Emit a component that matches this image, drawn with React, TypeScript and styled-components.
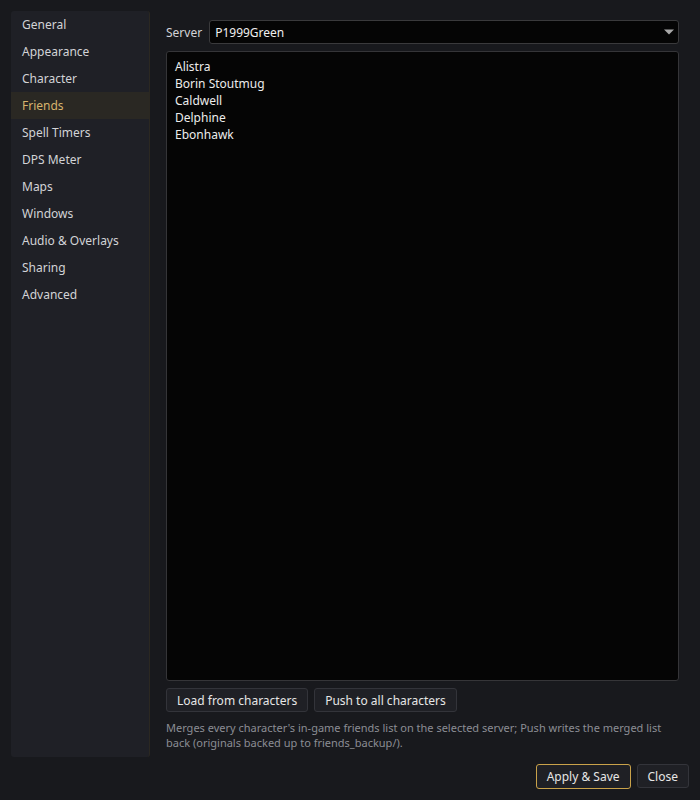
import styled, { createGlobalStyle } from "styled-components";

const GlobalStyle = createGlobalStyle`
  html, body {
    margin: 0;
    padding: 0;
    background: #18191d;
  }
  body {
    font-family: "Noto Sans", "Open Sans", sans-serif;
    font-size: 12px;
    color: #dcdcdc;
  }
  * {
    box-sizing: border-box;
  }
`;

const sections = [
  "General",
  "Appearance",
  "Character",
  "Friends",
  "Spell Timers",
  "DPS Meter",
  "Maps",
  "Windows",
  "Audio & Overlays",
  "Sharing",
  "Advanced",
];

const friends = ["Alistra", "Borin Stoutmug", "Caldwell", "Delphine", "Ebonhawk"];

const Window = styled.div`
  width: 700px;
  height: 800px;
  padding: 11px;
  display: flex;
  flex-direction: column;
  gap: 7px;
`;

const Main = styled.div`
  flex: 1;
  display: flex;
  gap: 16px;
  min-height: 0;
`;

const Sidebar = styled.nav`
  width: 139px;
  background: #1f2026;
  border-right: 1px solid #2b2821;
  border-radius: 3px;
  display: flex;
  flex-direction: column;
`;

const NavItem = styled.div<{ $active?: boolean }>`
  height: 27px;
  line-height: 27px;
  padding-left: 11px;
  color: ${(p) => (p.$active ? "#d6b36c" : "#d2d3d6")};
  background: ${(p) => (p.$active ? "#2a2823" : "transparent")};
`;

const Content = styled.div`
  flex: 1;
  display: flex;
  flex-direction: column;
  gap: 7px;
  padding: 9px 10px 7px 0;
  min-width: 0;
`;

const ServerRow = styled.div`
  display: flex;
  align-items: center;
  gap: 7px;
`;

const Label = styled.span`
  color: #d2d3d6;
`;

const Combo = styled.div`
  flex: 1;
  height: 24px;
  display: flex;
  align-items: center;
  justify-content: space-between;
  padding: 0 4px 0 5px;
  background: #050505;
  border: 1px solid #3a3a3c;
  border-radius: 3px;
  color: #f0f0f0;
`;

const List = styled.div`
  flex: 1;
  background: #050505;
  border: 1px solid #353538;
  border-radius: 3px;
  padding: 6px 8px;
  display: flex;
  flex-direction: column;
`;

const ListItem = styled.div`
  line-height: 17px;
  color: #ececec;
`;

const ButtonRow = styled.div<{ $end?: boolean }>`
  display: flex;
  gap: 6px;
  justify-content: ${(p) => (p.$end ? "flex-end" : "flex-start")};
`;

const Button = styled.button<{ $primary?: boolean }>`
  height: ${(p) => (p.$primary ? "25px" : "24px")};
  padding: 0 10px;
  font-family: inherit;
  font-size: 12px;
  color: #e6e6e6;
  background: #1f2025;
  border: 1px solid ${(p) => (p.$primary ? "#c9a24a" : "#33343a")};
  border-radius: 3px;
`;

const Help = styled.p`
  margin: 1px 0 0;
  font-size: 11px;
  line-height: 15px;
  color: #8b8d94;
`;

const Arrow = () => (
  <svg width="10" height="6" viewBox="0 0 10 6">
    <path d="M0 0.5h10L5 5.5z" fill="#a9a9a9" />
  </svg>
);

export default function App() {
  return (
    <>
      <GlobalStyle />
      <Window>
        <Main>
          <Sidebar>
            {sections.map((s) => (
              <NavItem key={s} $active={s === "Friends"}>
                {s}
              </NavItem>
            ))}
          </Sidebar>
          <Content>
            <ServerRow>
              <Label>Server</Label>
              <Combo>
                <span>P1999Green</span>
                <Arrow />
              </Combo>
            </ServerRow>
            <List>
              {friends.map((f) => (
                <ListItem key={f}>{f}</ListItem>
              ))}
            </List>
            <ButtonRow>
              <Button>Load from characters</Button>
              <Button>Push to all characters</Button>
            </ButtonRow>
            <Help>
              Merges every character's in-game friends list on the selected server; Push writes the merged list
              back (originals backed up to friends_backup/).
            </Help>
          </Content>
        </Main>
        <ButtonRow $end>
          <Button $primary>Apply &amp; Save</Button>
          <Button>Close</Button>
        </ButtonRow>
      </Window>
    </>
  );
}
